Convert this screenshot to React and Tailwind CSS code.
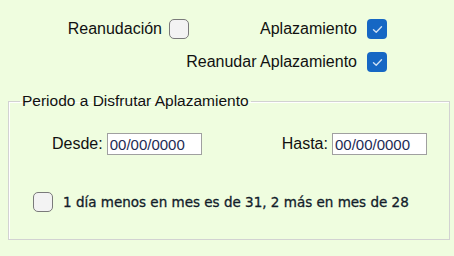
import React from 'react';

const sans = { fontFamily: '"Liberation Sans", Arial, sans-serif' };

const Box = ({ checked }) =>
  checked ? (
    <span className="flex h-[20px] w-[20px] items-center justify-center rounded-[4px] bg-[#1667c4]">
      <svg width="11" height="9" viewBox="0 0 11 9" fill="none">
        <path d="M1.5 4.8 L4.2 7.2 L9.5 1.8" stroke="#cfe0f5" strokeWidth="1.4" strokeLinecap="round" strokeLinejoin="round" />
      </svg>
    </span>
  ) : (
    <span className="block h-[20px] w-[20px] rounded-[5px] border-[1.5px] border-[#7a7a7a] bg-[#f3f3f3]" />
  );

const DateField = ({ label, className }) => (
  <div className={`flex items-center gap-[4px] ${className}`}>
    <span className="text-[16px] text-[#111]" style={sans}>{label}</span>
    <div className="flex h-[22px] w-[95px] items-center border border-[#a0a0a0] bg-white pl-[2px]">
      <span className="text-[15px] leading-none text-[#1d2b55]" style={sans}>00/00/0000</span>
    </div>
  </div>
);

export default function App() {
  return (
    <div className="h-[256px] w-[454px] bg-[#effddf] pt-[19px]">
      <div className="grid w-[387px] grid-cols-[189px_198px] gap-y-[13px]" style={sans}>
        <label className="flex items-center justify-end gap-[7px] text-[16px] leading-[20px] text-[#111]">
          Reanudación <Box />
        </label>
        <label className="flex items-center justify-end gap-[10px] text-[16px] leading-[20px] text-[#111]">
          Aplazamiento <Box checked />
        </label>
        <label className="col-span-2 flex items-center justify-end gap-[10px] text-[16px] leading-[20px] text-[#111]">
          Reanudar Aplazamiento <Box checked />
        </label>
      </div>

      <fieldset className="mx-[8px] mt-[20px] h-[148px] w-[442px] border border-[#d2d2d2] px-[11px] pb-0 pt-[22px] shadow-[inset_1px_1px_0_#ffffff]">
        <legend className="ml-[0px] px-[2px] text-[15.5px] leading-[18px] text-[#111]" style={sans}>
          Periodo a Disfrutar Aplazamiento
        </legend>
        <div className="flex items-center">
          <DateField label="Desde:" className="ml-[32px]" />
          <DateField label="Hasta:" className="ml-[80px]" />
        </div>
        <label className="mt-[36px] flex items-center gap-[10px]">
          <span className="ml-[13px]"><Box /></span>
          <span
            className="text-[13.5px] text-[#121c2a] [-webkit-text-stroke:0.3px_#121c2a]"
            style={{ fontFamily: '"DejaVu Sans", Verdana, sans-serif' }}
          >
            1 día menos en mes es de 31, 2 más en mes de 28
          </span>
        </label>
      </fieldset>
    </div>
  );
}
